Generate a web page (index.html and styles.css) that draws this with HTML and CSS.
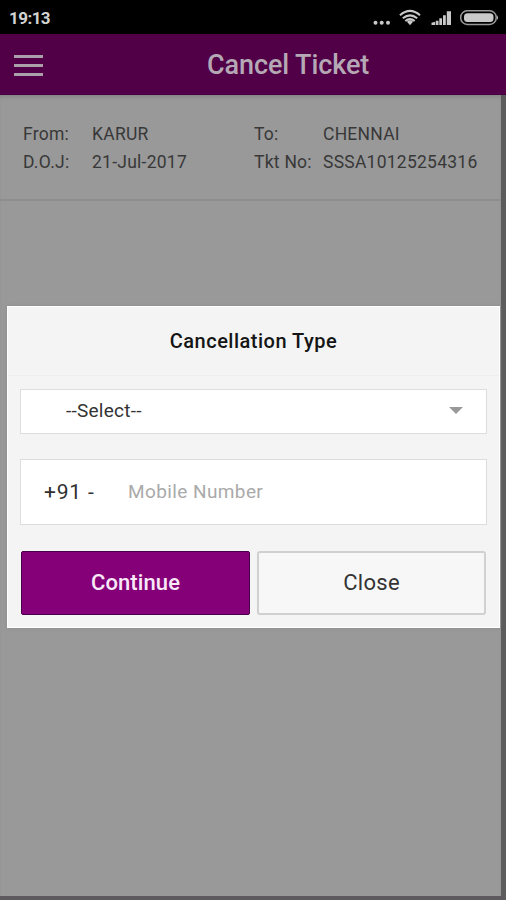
FILE: index.html
```
<!DOCTYPE html>
<html lang="en">
<head>
<meta charset="utf-8">
<title>Cancel Ticket</title>
<link rel="stylesheet" href="styles.css">
</head>
<body>
<div class="screen">
  <div class="status">
    <span class="clock">19:13</span>
    <svg class="status-icons" width="128" height="18" viewBox="0 0 128 18">
      <g fill="#c9c9c9">
        <circle cx="3.500" cy="13.800" r="2"/><circle cx="9.700" cy="13.800" r="2"/><circle cx="16" cy="13.800" r="2"/>
        <path d="M38 16.200 35 12.800a4.300 4.300 0 0 1 6 0z"/>
        <path d="M59.500 16v-2.300l3.600-1V16zM63.800 16v-4.200h2.700V16zM67.300 16V9.200H70V16zM71 16V6.200h2.800V16zM74.800 16V2.200h4.200V16z"/>
        <rect x="92" y="4.300" width="29.500" height="8.800" rx="3.500"/>
      </g>
      <g fill="none" stroke="#c9c9c9">
        <path stroke-width="2.100" d="M28 6.200q10-8.500 20 0M30.800 9.300q7.200-6 14.400 0M33.300 12q4.700-3.800 9.400 0"/>
        <rect x="88.700" y="1.800" width="35.500" height="13.600" rx="6.500" stroke-width="1.500" stroke="#999"/>
      </g>
      <path d="M125 6.200q2 2.300 0 4.800z" fill="#bbb"/>
    </svg>
  </div>
  <header class="bar">
    <div class="menu"><i></i><i></i><i></i></div>
    <h1>Cancel Ticket</h1>
  </header>
  <main class="page">
    <section class="trip">
      <span>From:</span><span class="karur">KARUR</span><span>To:</span><span class="chennai">CHENNAI</span>
      <span>D.O.J:</span><span class="date">21-Jul-2017</span><span class="tkt">Tkt No:</span><span class="number">SSSA10125254316</span>
    </section>
    <section class="dialog">
      <h2><span>Cancellation Type</span></h2>
      <div class="field select"><span>--Select--</span><b class="caret"></b></div>
      <div class="field phone"><span class="code">+91 -</span><span class="placeholder">Mobile Number</span></div>
      <div class="actions">
        <div class="button primary"><span>Continue</span></div>
        <div class="button"><span class="close">Close</span></div>
      </div>
    </section>
  </main>
</div>
</body>
</html>
```
FILE: styles.css
```
* { box-sizing: border-box; }
body { margin: 0; font-family: Roboto, "Liberation Sans", sans-serif; }
.screen { width: 506px; height: 900px; display: flex; flex-direction: column; overflow: hidden; background: #999; }
.status { height: 34px; background: #000; display: flex; justify-content: space-between; padding: 0 6px 0 9px; }
.clock { font-size: 17px; font-weight: 700; line-height: 36px; color: #d2d2d2; letter-spacing: -.55px; }
.status-icons { margin-top: 9px; }
.bar { height: 61px; background: #510048; display: flex; border-bottom: 1px solid #430040; }
.menu { width: 29px; margin: 21px 0 0 14px; display: flex; flex-direction: column; gap: 6px; }
.menu i { height: 3px; background: #aaa0aa; }
.bar h1 { margin: 0 0 0 164px; font-size: 27px; font-weight: 500; line-height: 62px; letter-spacing: -.1px; color: #b5a8b5; white-space: nowrap; }
.page { flex: 1; border-right: 5px solid #5c5c5c; border-bottom: 4px solid #5d5a5d; box-shadow: inset 0 4px 4px -2px #858585; }
.trip { height: 106px; padding: 25px 0 0 23px; display: grid; grid-template-columns: 69px 162px 69px 1fr; grid-template-rows: 28px 28px; font-size: 17.500px; line-height: 28px; letter-spacing: .25px; color: #383838; border-bottom: 2px solid #8e8e8e; white-space: nowrap; }
.dialog { width: 493px; height: 322px; margin: 105px 0 0 7px; padding: 0 13px; background: #f4f4f4; border: 1px solid #fff; box-shadow: 0 0 3px #888; }
.dialog h2 { margin: 0 -13px 13px; height: 69px; text-align: center; font-size: 20px; font-weight: 500; line-height: 69px; letter-spacing: .5px; color: #151515; border-bottom: 1px solid #ededed; }
.field { background: #fff; border: 1px solid #ddd; display: flex; margin-left: -1px; width: 467px; }
.select { height: 45px; padding: 0 23px 2px 45px; align-items: center; justify-content: space-between; font-size: 19px; letter-spacing: .25px; color: #333; line-height: 41px; }
.caret { width: 14px; height: 7px; background: #999; clip-path: polygon(0 0, 100% 0, 50% 100%); }
.phone { height: 66px; margin-top: 25px; padding-left: 23px; line-height: 64px; }
.code { width: 84px; font-size: 21px; letter-spacing: .8px; color: #303030; }
.placeholder { font-size: 19px; letter-spacing: .4px; color: #aaa; }
.actions { display: flex; gap: 7px; margin-top: 26px; }
.button { width: 229px; height: 64px; border: 2px solid #d0d0d0; border-radius: 3px; background: #f7f7f7; text-align: center; font-size: 22px; line-height: 59px; letter-spacing: .3px; color: #333; }
.primary { border: 1px solid #49004a; border-radius: 2px; background: #850078; color: #f8e8f8; font-weight: 500; line-height: 61px; letter-spacing: .1px; }
```
